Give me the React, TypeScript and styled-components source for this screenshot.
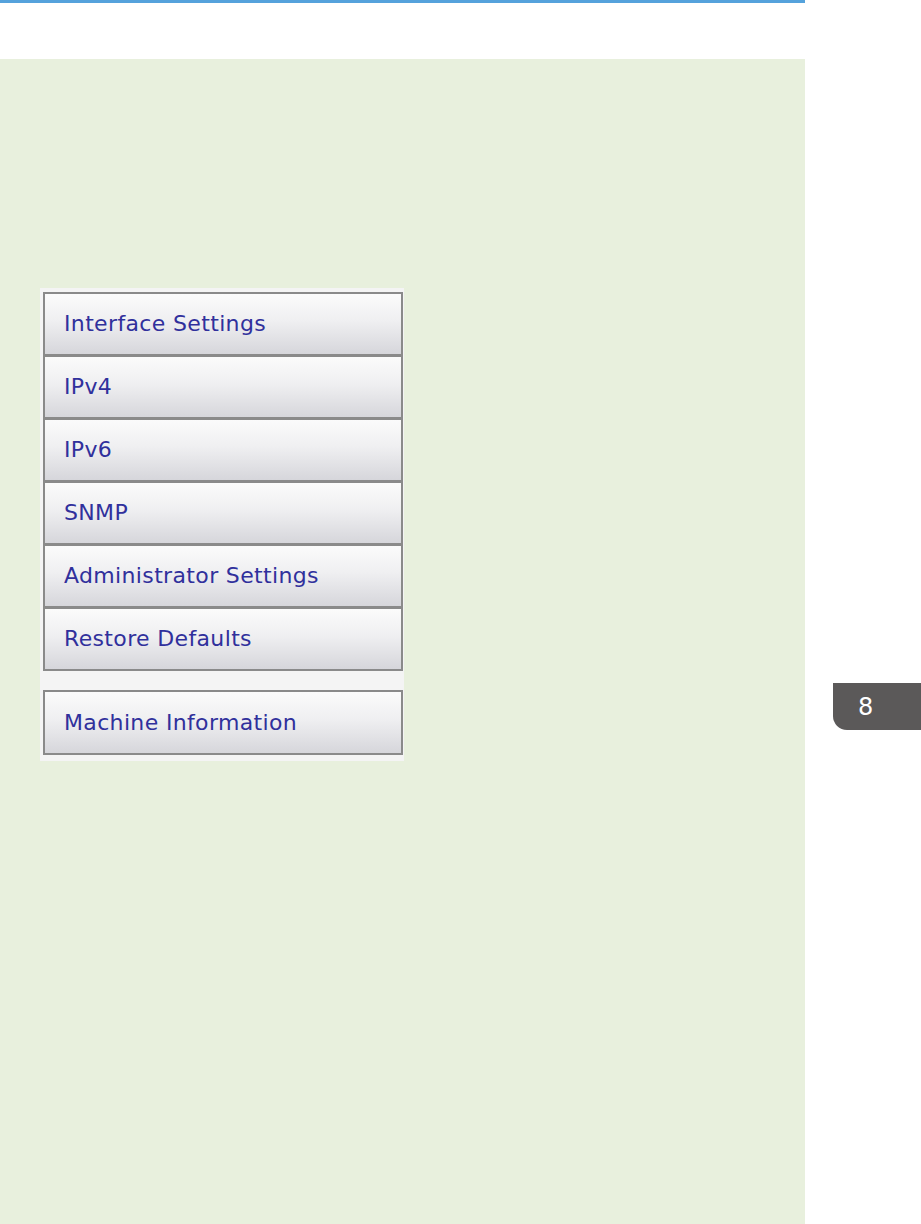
import React from 'react';
import styled, { createGlobalStyle } from 'styled-components';

const GlobalStyle = createGlobalStyle`
  html, body {
    margin: 0;
    padding: 0;
    background: #fff;
  }
`;

const Page = styled.div`
  width: 921px;
  height: 1224px;
  display: flex;
  flex-direction: column;
  overflow: hidden;
  background: #fff;
`;

const TopRule = styled.div`
  width: 805px;
  height: 3px;
  background: #55a2dc;
  flex-shrink: 0;
`;

const Body = styled.div`
  display: flex;
  margin-top: 56px;
  flex: 1;
`;

const Panel = styled.div`
  width: 805px;
  flex-shrink: 0;
  background: #e8f0dd;
  padding: 229px 0 0 40px;
  box-sizing: border-box;
`;

const Aside = styled.div`
  flex: 1;
  padding-top: 624px;
  padding-left: 28px;
`;

const ChapterTab = styled.div`
  height: 47px;
  background: #5b5959;
  border-bottom-left-radius: 14px;
  color: #fff;
  font-family: "DejaVu Sans", "Liberation Sans", sans-serif;
  font-size: 24px;
  display: flex;
  align-items: center;
  padding-left: 25px;
`;

const Menu = styled.nav`
  width: 364px;
  background: #f4f4f4;
  padding: 4px 1px 6px 3px;
  box-sizing: border-box;
  display: flex;
  flex-direction: column;
`;

const Group = styled.div<{ spaced?: boolean }>`
  display: flex;
  flex-direction: column;
  margin-top: ${({ spaced }) => (spaced ? '19px' : '0')};
`;

const Item = styled.div<{ first?: boolean; tall?: boolean }>`
  height: ${({ first, tall }) => (tall ? '65px' : first ? '64px' : '63px')};
  box-sizing: border-box;
  border: 2px solid #8a8a8a;
  border-top-width: ${({ first }) => (first ? '2px' : '1px')};
  background: linear-gradient(to bottom, #fbfbfb 0%, #efeff1 45%, #d6d6db 100%);
  display: flex;
  align-items: center;
  padding-left: 19px;
  padding-bottom: 1px;
  color: #30309c;
  font-family: "DejaVu Sans", Verdana, sans-serif;
  font-size: 22px;
  letter-spacing: 0.35px;
`;

const mainItems = [
  'Interface Settings',
  'IPv4',
  'IPv6',
  'SNMP',
  'Administrator Settings',
  'Restore Defaults',
];

export default function App() {
  return (
    <>
      <GlobalStyle />
      <Page>
        <TopRule />
        <Body>
          <Panel>
            <Menu>
              <Group>
                {mainItems.map((label, i) => (
                  <Item key={label} first={i === 0}>
                    {label}
                  </Item>
                ))}
              </Group>
              <Group spaced>
                <Item first tall>Machine Information</Item>
              </Group>
            </Menu>
          </Panel>
          <Aside>
            <ChapterTab>8</ChapterTab>
          </Aside>
        </Body>
      </Page>
    </>
  );
}
